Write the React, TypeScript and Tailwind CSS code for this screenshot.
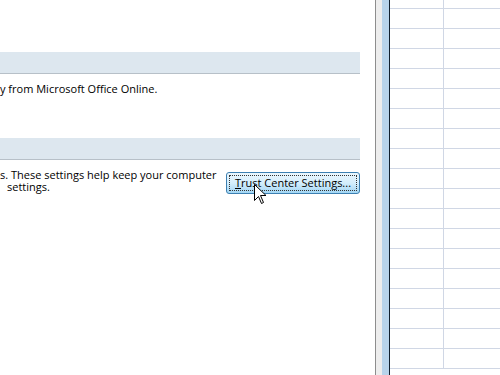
import React from 'react';

const rows = Array.from({ length: 18 });

const SectionHeader: React.FC = () => (
  <div className="h-[22px] w-[360px] bg-[#dde7ef] border-b border-[#b7c0c8]" />
);

export default function App() {
  return (
    <div className="flex w-[500px] h-[375px] overflow-hidden bg-white font-['Open_Sans',sans-serif] text-[11px] text-black">
      {/* Options dialog */}
      <div className="relative w-[375px] shrink-0 bg-white pt-[52px]">
        <SectionHeader />
        <p className="mt-[7px] leading-[15px] whitespace-nowrap">y from Microsoft Office Online.</p>

        <div className="mt-[42px]">
          <SectionHeader />
        </div>

        <div className="mt-[9px] flex items-start">
          <div className="w-[226px] leading-[12px] whitespace-nowrap">
            <p>s. These settings help keep your computer</p>
            <p className="pl-[7px]">settings.</p>
          </div>
          <button className="mt-[3px] h-[22px] w-[134px] rounded-[3px] border border-[#3c7fb1] bg-gradient-to-b from-[#eaf6fd] via-[#d4eefc] to-[#a2d6f4] p-[2px] text-[11px]">
            <span className="flex h-full w-full items-center justify-center border border-dotted border-[#333]">
              <span className="underline">T</span>rust Center Settings...
            </span>
          </button>
        </div>

        {/* mouse pointer */}
        <svg className="absolute left-[254px] top-[184px]" width="13" height="21" viewBox="0 0 13 21">
          <path
            d="M0.5 0.5 L0.5 16.5 L4.5 12.5 L7.5 19.5 L9.5 18.5 L6.5 11.5 L12 11.5 Z"
            fill="#fff"
            stroke="#000"
            strokeWidth="1"
            strokeLinejoin="miter"
          />
        </svg>
      </div>

      {/* window edge */}
      <div className="w-px shrink-0 bg-[#8d8d8d]" />
      <div className="w-[6px] shrink-0 bg-[#ededed]" />
      <div className="w-[7px] shrink-0 bg-[#b7d3ea]" />
      <div className="w-px shrink-0 bg-[#10202e]" />

      {/* worksheet grid */}
      <div className="flex-1 flex flex-col">
        <div className="h-[9px] shrink-0 flex border-b border-[#d0d7e5]">
          <div className="w-[54px] border-r border-[#d0d7e5]" />
        </div>
        {rows.map((_, i) => (
          <div key={i} className="h-[20px] shrink-0 flex border-b border-[#d0d7e5]">
            <div className="w-[54px] border-r border-[#d0d7e5]" />
          </div>
        ))}
      </div>
    </div>
  );
}
